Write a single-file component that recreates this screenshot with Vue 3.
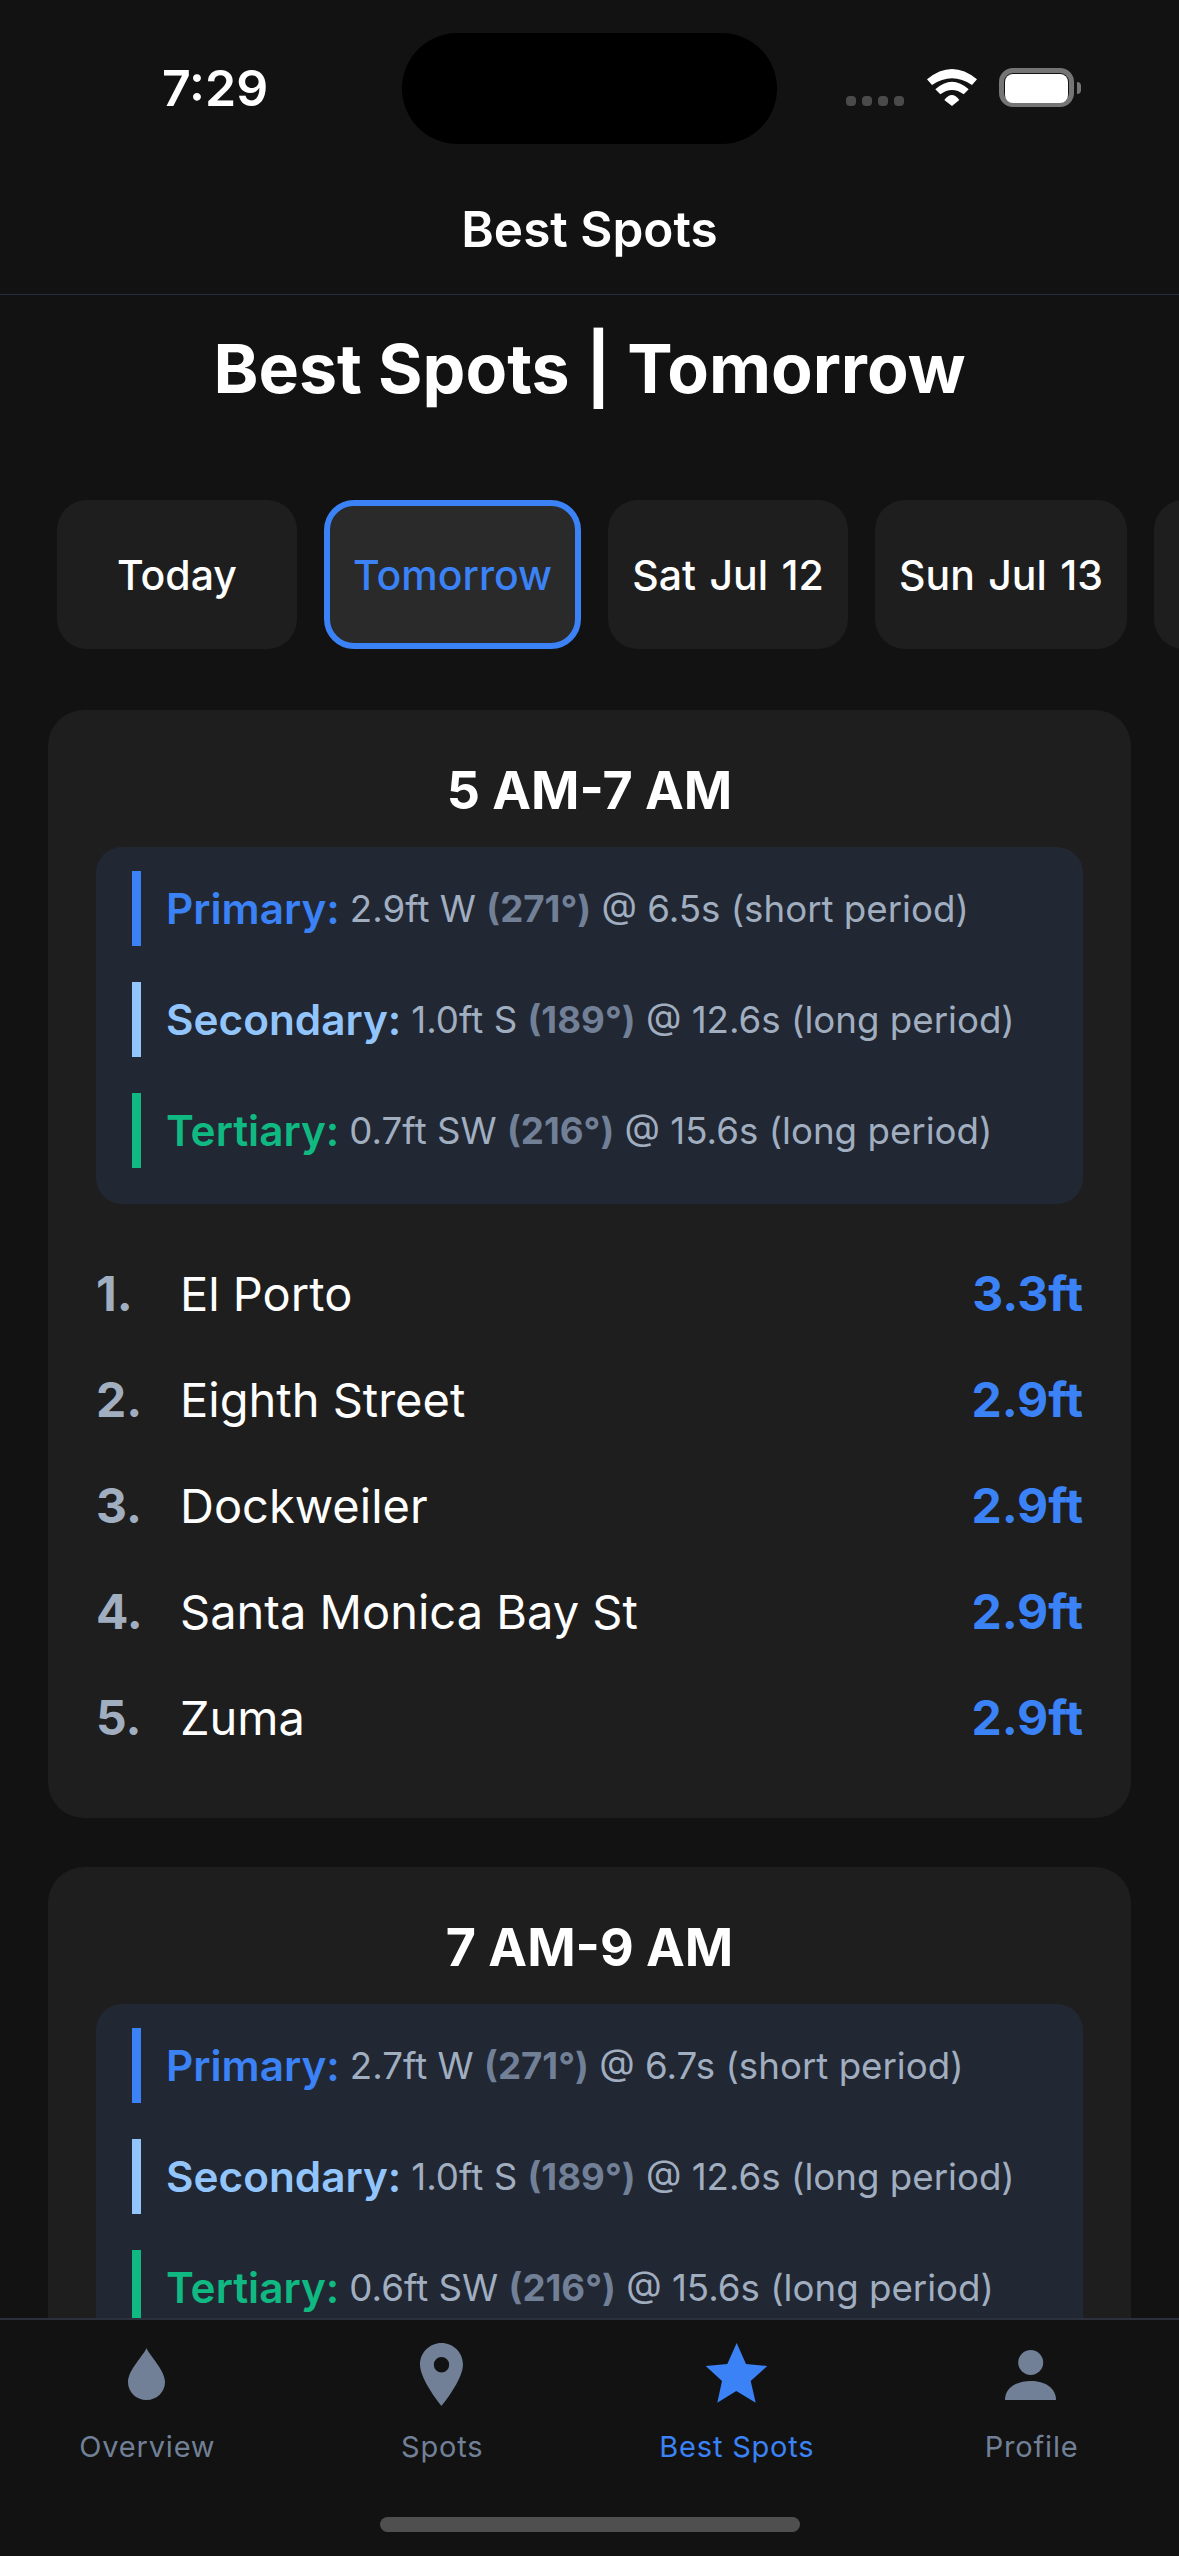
<template>
  <div class="phone">
    <div class="status-bar">
      <span class="time">7:29</span>
      <div class="island"></div>
      <div class="signal">
        <i v-for="n in 4" :key="n"></i>
      </div>
      <svg class="wifi" width="50" height="37" viewBox="0 0 50 37" fill="#fff">
        <path d="M0 10.3Q25 -10.3 50 10.3L45 16Q25 2.6 5 16Z" />
        <path d="M8.3 20.3Q25 5.1 41.7 20.3L36.7 25.3Q25 16.7 13.3 25.3Z" />
        <path d="M17.3 31Q25 21 32.3 31L25 37Z" />
      </svg>
      <div class="battery"><div class="battery-fill"></div></div>
      <div class="battery-nub"></div>
    </div>

    <header class="nav-header">Best Spots</header>

    <main class="content">
      <h1 class="title">Best Spots | Tomorrow</h1>

      <div class="day-tabs">
        <button
          v-for="day in days"
          :key="day"
          class="day-tab"
          :class="{ active: day === 'Tomorrow' }"
        >{{ day }}</button>
      </div>

      <section v-for="slot in slots" :key="slot.time" class="card">
        <h2 class="slot-time">{{ slot.time }}</h2>
        <div class="swell-box">
          <div v-for="swell in slot.swells" :key="swell.name" class="swell" :class="swell.name.toLowerCase()">
            <span class="swell-name">{{ swell.name }}:</span>
            <span class="swell-text"> {{ swell.height }} <b>({{ swell.deg }}°)</b> @ {{ swell.period }}</span>
          </div>
        </div>
        <ol class="spots">
          <li v-for="(spot, i) in slot.spots" :key="spot.name" class="spot">
            <span class="rank">{{ i + 1 }}.</span>
            <span class="spot-name">{{ spot.name }}</span>
            <span class="spot-height">{{ spot.height }}</span>
          </li>
        </ol>
      </section>
    </main>

    <nav class="tab-bar">
      <div class="tab">
        <svg width="72" height="72" viewBox="0 0 72 72" fill="#718096">
          <path d="M35.5 10C38 17 54 32 54 44C54 54 46 62 35.5 62C25 62 17 54 17 44C17 32 33 17 35.5 10Z" />
        </svg>
        <span>Overview</span>
      </div>
      <div class="tab">
        <svg width="72" height="72" viewBox="0 0 72 72" fill="#718096">
          <path fill-rule="evenodd" d="M35.5 5C23.6 5 14 14.6 14 26.5C14 42 35.5 68 35.5 68C35.5 68 57 42 57 26.5C57 14.6 47.4 5 35.5 5ZM35.5 19A7.7 7.7 0 1 1 35.5 34.4A7.7 7.7 0 1 1 35.5 19Z" />
        </svg>
        <span>Spots</span>
      </div>
      <div class="tab active">
        <svg width="72" height="72" viewBox="0 0 72 72" fill="#3b82f6">
          <path d="M35.7 5L45 26L66.3 28L49.7 43L54.7 64.7L35.3 53L16.3 64.7L21 43L4.7 28L26.3 26Z" />
        </svg>
        <span>Best Spots</span>
      </div>
      <div class="tab">
        <svg width="72" height="72" viewBox="0 0 72 72" fill="#718096">
          <circle cx="34.7" cy="24.5" r="12.5" />
          <path d="M9 62C9 50 20 43 34.7 43C49 43 60 50 60 62Z" />
        </svg>
        <span>Profile</span>
      </div>
    </nav>
    <div class="home-area"><div class="home-indicator"></div></div>
  </div>
</template>

<script setup>
const days = ['Today', 'Tomorrow', 'Sat Jul 12', 'Sun Jul 13', 'Mon Jul 14'];

const slots = [
  {
    time: '5 AM-7 AM',
    swells: [
      { name: 'Primary', height: '2.9ft W', deg: 271, period: '6.5s (short period)' },
      { name: 'Secondary', height: '1.0ft S', deg: 189, period: '12.6s (long period)' },
      { name: 'Tertiary', height: '0.7ft SW', deg: 216, period: '15.6s (long period)' },
    ],
    spots: [
      { name: 'El Porto', height: '3.3ft' },
      { name: 'Eighth Street', height: '2.9ft' },
      { name: 'Dockweiler', height: '2.9ft' },
      { name: 'Santa Monica Bay St', height: '2.9ft' },
      { name: 'Zuma', height: '2.9ft' },
    ],
  },
  {
    time: '7 AM-9 AM',
    swells: [
      { name: 'Primary', height: '2.7ft W', deg: 271, period: '6.7s (short period)' },
      { name: 'Secondary', height: '1.0ft S', deg: 189, period: '12.6s (long period)' },
      { name: 'Tertiary', height: '0.6ft SW', deg: 216, period: '15.6s (long period)' },
    ],
    spots: [],
  },
];
</script>

<style>
html, body {
  margin: 0;
  background: #121212;
}
</style>

<style scoped>
.phone {
  width: 1179px;
  height: 2556px;
  display: flex;
  flex-direction: column;
  overflow: hidden;
  background: #121212;
  color: #fff;
  font-family: Inter, "Liberation Sans", sans-serif;
}

.status-bar {
  height: 177px;
  flex-shrink: 0;
  display: flex;
  align-items: flex-start;
}

.time {
  width: 402px;
  padding-left: 162px;
  box-sizing: border-box;
  margin-top: 58px;
  font-size: 50px;
  line-height: 60px;
  font-weight: 600;
}

.island {
  width: 375px;
  height: 111px;
  margin-top: 33px;
  border-radius: 56px;
  background: #000;
}

.signal {
  display: flex;
  gap: 6px;
  margin: 96px 0 0 69px;
}

.signal i {
  width: 10px;
  height: 10px;
  border-radius: 4px;
  background: #4a4a4a;
}

.wifi {
  margin: 69px 0 0 23px;
}

.battery {
  width: 75px;
  height: 39px;
  box-sizing: border-box;
  margin: 68px 0 0 22px;
  padding: 5px 6px;
  border: 5px solid #757575;
  border-radius: 14px;
}

.battery-fill {
  margin: -4px -5px;
  height: 29px;
  border-radius: 8px;
  background: #fff;
}

.battery-nub {
  width: 4px;
  height: 12px;
  margin: 82px 0 0 3px;
  border-radius: 0 4px 4px 0;
  background: #757575;
}

.nav-header {
  height: 117px;
  flex-shrink: 0;
  border-bottom: 1px solid #262d3d;
  text-align: center;
  font-size: 49.5px;
  line-height: 104px;
  font-weight: 600;
}

.content {
  flex: 1;
  min-height: 0;
  overflow: hidden;
}

.title {
  margin: 30px 0 0;
  text-align: center;
  font-size: 68px;
  line-height: 87px;
  font-weight: 700;
}

.day-tabs {
  display: flex;
  gap: 27px;
  margin: 88px 0 61px;
  padding-left: 57px;
  overflow: hidden;
}

.day-tab {
  flex-shrink: 0;
  min-width: 240px;
  height: 149px;
  padding: 0 24px;
  border: none;
  border-radius: 30px;
  background: #1e1e1e;
  color: #fff;
  font-family: inherit;
  font-size: 41px;
  font-weight: 500;
  word-spacing: 2.5px;
}

.day-tab.active {
  border: 6px solid #3b82f6;
  padding: 0 23px;
  background: #2a2a2a;
  color: #3b82f6;
}

.card {
  margin: 0 48px 49px;
  padding: 48px;
  border-radius: 36px;
  background: #1e1e1e;
}

.slot-time {
  margin: 0;
  text-align: center;
  font-size: 52px;
  line-height: 66px;
  font-weight: 700;
}

.swell-box {
  display: flex;
  flex-direction: column;
  gap: 36px;
  margin-top: 23px;
  padding: 24px 36px 36px;
  border-radius: 26px;
  background: #212733;
}

.swell {
  height: 75px;
  display: flex;
  align-items: center;
  gap: 10px;
  padding-left: 25px;
  border-left: 9px solid;
  white-space: pre;
}

.swell.primary {
  border-color: #3b82f6;
  color: #3b82f6;
}

.swell.secondary {
  border-color: #93c5fd;
  color: #93c5fd;
}

.swell.tertiary {
  border-color: #10b981;
  color: #10b981;
}

.swell-name {
  font-size: 42.3px;
  font-weight: 600;
}

.swell-text {
  font-size: 36.7px;
  color: #a0aec0;
}

.swell-text b {
  font-weight: 700;
  color: #718096;
}

.spots {
  list-style: none;
  margin: 36px 0 0;
  padding: 0;
}

.spot {
  height: 106px;
  display: flex;
  align-items: center;
  font-size: 48px;
}

.rank {
  width: 84px;
  font-weight: 700;
  color: #a0aec0;
}

.spot-name {
  flex: 1;
  font-size: 47px;
  font-weight: 400;
}

.spot-height {
  font-weight: 700;
  color: #3b82f6;
}

.tab-bar {
  flex-shrink: 0;
  display: flex;
  padding-top: 18px;
  border-top: 2px solid #2a303c;
  background: #121212;
}

.tab {
  flex: 1;
  display: flex;
  flex-direction: column;
  align-items: center;
  font-size: 29px;
  line-height: 36px;
  letter-spacing: 0.8px;
  color: #718096;
}

.tab span {
  margin-top: 19px;
}

.tab.active {
  color: #3b82f6;
}

.home-area {
  flex-shrink: 0;
  height: 91px;
  display: flex;
  justify-content: center;
  align-items: flex-end;
  padding-bottom: 24px;
  box-sizing: border-box;
  background: #121212;
}

.home-indicator {
  width: 420px;
  height: 15px;
  border-radius: 8px;
  background: #4f4f4f;
}
</style>
